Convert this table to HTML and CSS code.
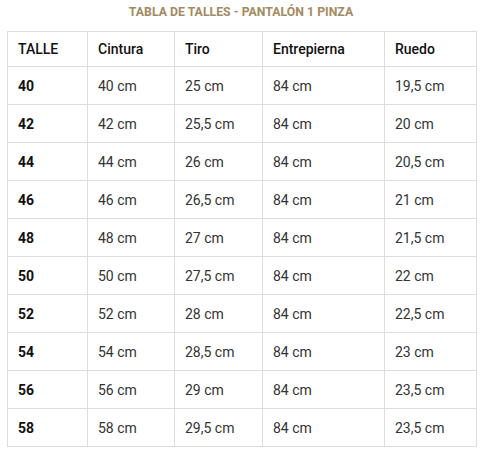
FILE: index.html
```html
<!DOCTYPE html>
<html>
<head>
<meta charset="utf-8">
<link rel="stylesheet" href="styles.css">
</head>
<body>
<div class="wrap">
  <h2 class="title">TABLA DE TALLES - PANTALÓN 1 PINZA</h2>
  <table class="sizes">
    <colgroup>
      <col class="c1"><col class="c2"><col class="c3"><col class="c4"><col class="c5">
    </colgroup>
    <thead>
      <tr><th>TALLE</th><th>Cintura</th><th>Tiro</th><th>Entrepierna</th><th>Ruedo</th></tr>
    </thead>
    <tbody>
      <tr><td class="size">40</td><td>40 cm</td><td>25 cm</td><td>84 cm</td><td>19,5 cm</td></tr>
      <tr><td class="size">42</td><td>42 cm</td><td>25,5 cm</td><td>84 cm</td><td>20 cm</td></tr>
      <tr><td class="size">44</td><td>44 cm</td><td>26 cm</td><td>84 cm</td><td>20,5 cm</td></tr>
      <tr><td class="size">46</td><td>46 cm</td><td>26,5 cm</td><td>84 cm</td><td>21 cm</td></tr>
      <tr><td class="size">48</td><td>48 cm</td><td>27 cm</td><td>84 cm</td><td>21,5 cm</td></tr>
      <tr><td class="size">50</td><td>50 cm</td><td>27,5 cm</td><td>84 cm</td><td>22 cm</td></tr>
      <tr><td class="size">52</td><td>52 cm</td><td>28 cm</td><td>84 cm</td><td>22,5 cm</td></tr>
      <tr><td class="size">54</td><td>54 cm</td><td>28,5 cm</td><td>84 cm</td><td>23 cm</td></tr>
      <tr><td class="size">56</td><td>56 cm</td><td>29 cm</td><td>84 cm</td><td>23,5 cm</td></tr>
      <tr><td class="size">58</td><td>58 cm</td><td>29,5 cm</td><td>84 cm</td><td>23,5 cm</td></tr>
    </tbody>
  </table>
</div>
</body>
</html>
```
FILE: styles.css
```css
html, body {
  margin: 0;
  padding: 0;
  background: #fff;
}
body {
  font-family: Roboto, "Liberation Sans", Arial, sans-serif;
  color: #222;
}
.wrap {
  padding: 0 6px 0 7px;
}
.title {
  margin: 0 0 6px;
  height: 25px;
  padding-top: 3px;
  box-sizing: border-box;
  font-size: 12.3px;
  font-weight: 700;
  color: #a48a62;
  text-align: center;
  line-height: 18px;
}
.sizes {
  border-collapse: collapse;
  table-layout: fixed;
  width: 469px;
  font-size: 14px;
}
.c1 { width: 80px; }
.c2 { width: 87px; }
.c3 { width: 88px; }
.c4 { width: 122px; }
.c5 { width: 92px; }
.sizes th,
.sizes td {
  border: 1px solid #dddddd;
  padding: 0 10px;
  text-align: left;
  vertical-align: middle;
}
.sizes th {
  height: 34px;
  font-weight: 500;
  color: #111;
}
.sizes td {
  height: 37px;
  font-weight: 400;
  color: #333;
}
.sizes td.size {
  font-weight: 700;
  color: #111;
}
```
